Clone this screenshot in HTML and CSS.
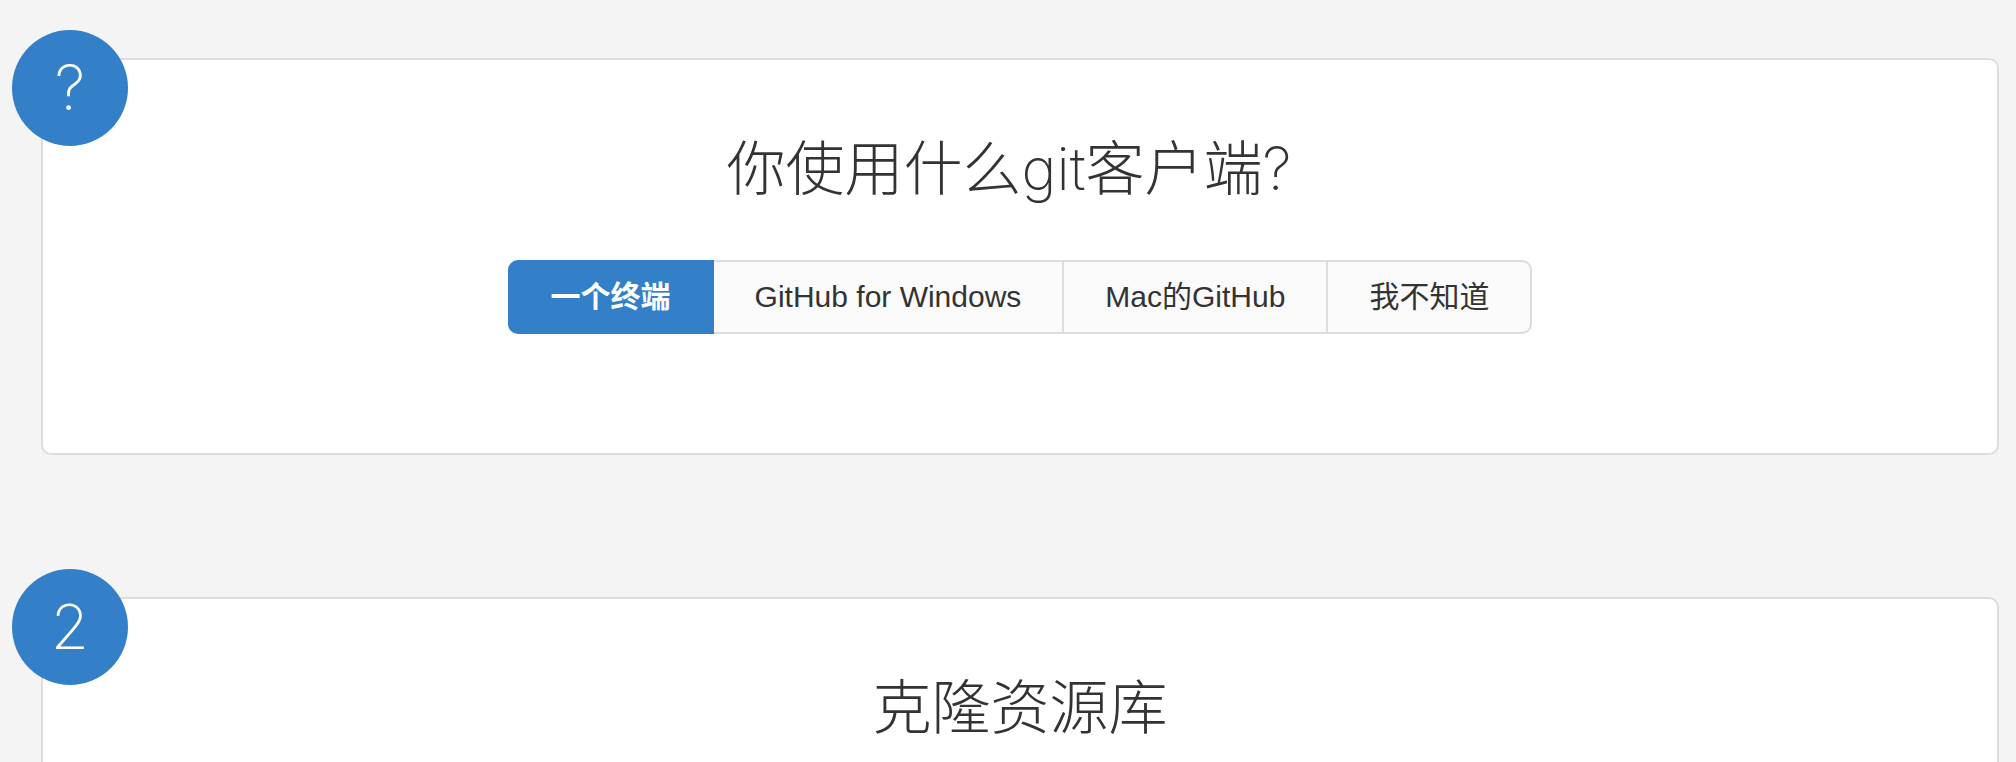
FILE: index.html
```html
<!DOCTYPE html>
<html lang="zh-CN">
<head>
<meta charset="utf-8">
<title>git</title>
<link rel="stylesheet" href="styles.css">
</head>
<body>
<main class="steps">
  <section class="step">
    <div class="step-badge">?</div>
    <h2 class="step-title">你使用什么git客户端?</h2>
    <div class="btn-group">
      <button class="btn active">一个终端</button>
      <button class="btn">GitHub for Windows</button>
      <button class="btn">Mac的GitHub</button>
      <button class="btn">我不知道</button>
    </div>
  </section>
  <section class="step step-tall">
    <div class="step-badge">2</div>
    <h2 class="step-title">克隆资源库</h2>
  </section>
</main>
</body>
</html>
```

FILE: styles.css
```css
html, body {
  margin: 0;
  padding: 0;
  background: #f4f4f4;
}
body {
  font-family: "Liberation Sans", "Noto Sans CJK SC", sans-serif;
  color: #333;
  overflow: hidden;
}
.steps {
  display: flex;
  flex-direction: column;
  gap: 142px;
  padding: 58px 17px 0 41px;
}
.step {
  position: relative;
  background: #fff;
  border: 2px solid #dddddd;
  border-radius: 10px;
  padding: 76px 0 119px;
  display: flex;
  flex-direction: column;
  align-items: center;
}
.step-tall {
  min-height: 400px;
}
.step-badge {
  position: absolute;
  left: -31px;
  top: -30px;
  width: 116px;
  height: 116px;
  border-radius: 50%;
  background: #3380c8;
  color: #fff;
  font-family: "Inter", "Lato", sans-serif;
  font-weight: 200;
  font-size: 62px;
  display: flex;
  align-items: center;
  justify-content: center;
  line-height: 1;
}
.step-title {
  margin: 0 0 58px;
  padding-right: 22px;
  font-family: "Inter", "Noto Sans CJK SC", sans-serif;
  font-weight: 200;
  font-size: 59px;
  line-height: 66px;
  color: #333;
}
.step-tall .step-title {
  padding-right: 0;
}
.btn-group {
  display: flex;
}
.btn {
  height: 74px;
  padding: 0 41px;
  margin: 0 0 0 -2px;
  border: 2px solid #dddddd;
  background: #fafafa;
  color: #333;
  font-family: "Liberation Sans", "Noto Sans CJK SC", sans-serif;
  font-size: 30px;
  line-height: 1;
  cursor: pointer;
}
.btn:first-child {
  margin-left: 0;
  border-radius: 10px 0 0 10px;
}
.btn:last-child {
  border-radius: 0 10px 10px 0;
}
.btn.active {
  position: relative;
  background: #3380c8;
  border-color: #3380c8;
  color: #fff;
  font-weight: 600;
}
```
